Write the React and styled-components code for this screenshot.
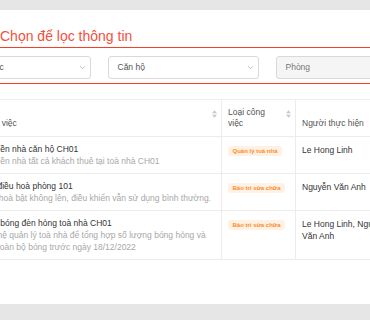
import React from "react";
import styled, { createGlobalStyle } from "styled-components";
import { ChevronDown } from "lucide-react";

const GlobalStyle = createGlobalStyle`
  html, body { margin: 0; padding: 0; background: #e6e6e6; }
  body { font-family: "Liberation Sans", Arial, Helvetica, sans-serif; }
  * { box-sizing: border-box; }
`;

const Page = styled.div`
  width: 370px;
  height: 320px;
  overflow: hidden;
  padding-top: 10px;
  background: #e6e6e6;
`;

const Panel = styled.div`
  background: #fff;
  height: 294px;
  overflow: hidden;
`;

const Heading = styled.h2`
  margin: 0;
  padding-top: 18px;
  font-size: 14px;
  line-height: 17px;
  font-weight: 400;
  color: #f4503c;
  white-space: nowrap;
`;

const FilterBox = styled.div`
  margin: 2px -90px 0 -70px;
  border: 1.5px solid #f43f2a;
  padding: 7.5px 0 4.5px 8.5px;
  display: flex;
  gap: 17px;
`;

const Select = styled.div`
  flex: 0 0 151px;
  height: 23px;
  border: 1px solid #d9d9d9;
  border-radius: 3px;
  background: ${(p) => (p.$disabled ? "#f5f5f5" : "#fff")};
  display: flex;
  align-items: center;
  justify-content: space-between;
  padding: 0 3px 0 9px;
  font-size: 8.5px;
  color: ${(p) => (p.$disabled ? "#777" : "#555")};
  white-space: nowrap;
`;

const Table = styled.div`
  margin: 14.5px 0 0 -27px;
  border-top: 1px solid #eeeef2;
  width: 440px;
`;

const Row = styled.div`
  display: grid;
  grid-template-columns: 249px 74px 104px;
  border-bottom: 1px solid #ececf0;
  min-height: ${(p) => (p.$head ? "37px" : "auto")};
`;

const HeadCell = styled.div`
  display: flex;
  justify-content: space-between;
  align-items: flex-end;
  gap: 4px;
  padding: 0 4px 7px 6px;
  font-size: 8.5px;
  line-height: 11px;
  color: #555;
  border-right: ${(p) => (p.$last ? "none" : "1px solid #ececf0")};
`;

const HeadText = styled.span`
  align-self: flex-end;
  white-space: ${(p) => (p.$nowrap ? "nowrap" : "normal")};
`;

const SortIcon = styled.svg`
  align-self: center;
  flex: 0 0 auto;
`;

const Cell = styled.div`
  padding: 7px 6px 6px;
  font-size: 8.5px;
  color: #333;
  line-height: 12px;
  border-right: ${(p) => (p.$last ? "none" : "1px solid #ececf0")};
`;

const Title = styled.div`
  line-height: 11px;
  color: #333;
  white-space: nowrap;
`;

const Sub = styled.div`
  line-height: 12px;
  color: #a8a8a8;
`;

const Tag = styled.span`
  display: inline-block;
  margin-top: 1px;
  padding: 1px 4.5px;
  font-size: 6px;
  line-height: 8px;
  font-weight: 700;
  color: #fa8c2a;
  background: #fff1e4;
  border-radius: 3px;
  white-space: nowrap;
`;

const Sorter = () => (
  <SortIcon width="5" height="8" viewBox="0 0 5 8">
    <polygon points="0,3.2 2.5,0.2 5,3.2" fill="#c8c8cc" />
    <polygon points="0,4.8 5,4.8 2.5,7.8" fill="#c8c8cc" />
  </SortIcon>
);

const rows = [
  {
    title: "Thu tiền nhà căn hộ CH01",
    sub: "Thu tiền nhà tất cả khách thuê tại toà nhà CH01",
    tag: "Quản lý toà nhà",
    who: "Le Hong Linh",
  },
  {
    title: "Sửa điều hoà phòng 101",
    sub: "Điều hoà bật không lên, điều khiển vẫn sử dụng bình thường.",
    tag: "Bảo trì sửa chữa",
    who: "Nguyễn Văn Anh",
  },
  {
    title: "Thay bóng đèn hỏng toà nhà CH01",
    sub: "Liên hệ quản lý toà nhà để tổng hợp số lượng bóng hỏng và thay toàn bộ bóng trước ngày 18/12/2022",
    tag: "Bảo trì sửa chữa",
    who: "Le Hong Linh, Nguyễn Văn Anh",
  },
];

export default function App() {
  return (
    <>
      <GlobalStyle />
      <Page>
        <Panel>
          <Heading>Chọn để lọc thông tin</Heading>
          <FilterBox>
            <Select>
              <span>Loại công việc</span>
              <ChevronDown size={9} color="#999" strokeWidth={1.6} />
            </Select>
            <Select>
              <span>Căn hộ</span>
              <ChevronDown size={9} color="#999" strokeWidth={1.6} />
            </Select>
            <Select $disabled>
              <span>Phòng</span>
              <ChevronDown size={9} color="#bbb" strokeWidth={1.6} />
            </Select>
          </FilterBox>
          <Table>
            <Row $head>
              <HeadCell>
                <HeadText>Công việc</HeadText>
                <Sorter />
              </HeadCell>
              <HeadCell>
                <HeadText>Loại công việc</HeadText>
                <Sorter />
              </HeadCell>
              <HeadCell $last>
                <HeadText $nowrap>Người thực hiện</HeadText>
              </HeadCell>
            </Row>
            {rows.map((r, i) => (
              <Row key={i}>
                <Cell>
                  <Title>{r.title}</Title>
                  <Sub>{r.sub}</Sub>
                </Cell>
                <Cell>
                  <Tag>{r.tag}</Tag>
                </Cell>
                <Cell $last>{r.who}</Cell>
              </Row>
            ))}
          </Table>
        </Panel>
      </Page>
    </>
  );
}
